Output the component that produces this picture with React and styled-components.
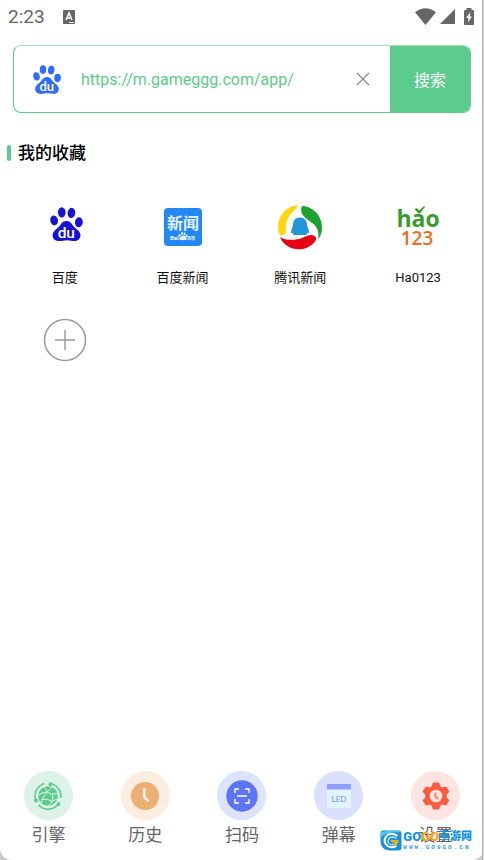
import { useState } from 'react';
import styled, { createGlobalStyle } from 'styled-components';

const GlobalStyle = createGlobalStyle`
  * {
    box-sizing: border-box;
  }
  body {
    margin: 0;
    background: #c9c9c9;
    font-family: Roboto, 'Noto Sans CJK SC', sans-serif;
  }
  button {
    font-family: inherit;
    border: none;
    padding: 0;
    background: none;
    cursor: pointer;
  }
  svg {
    flex-shrink: 0;
    overflow: visible;
  }
`;

const Screen = styled.div`
  position: relative;
  display: flex;
  flex-direction: column;
  min-height: 100vh;
  background: white;
  border-radius: 0 0 12px 12px;
`;

const Edge = styled.div`
  position: absolute;
  top: 0;
  right: 0;
  bottom: 0;
  width: 2px;
  background: #dcdcdc;
  border-left: 1px solid #b0b0b0;
`;

const StatusBar = styled.header`
  display: flex;
  align-items: center;
  height: 32px;
  padding: 2px 5px 0 8px;
  color: #666666;
`;

const Clock = styled.time`
  font-size: 19px;
  line-height: 30px;
  margin-right: 17px;
`;

const StatusIcons = styled.div`
  display: flex;
  align-items: center;
  gap: 4px;
  margin-left: auto;
  padding-bottom: 2px;
`;

const SearchBar = styled.form`
  display: flex;
  height: 68px;
  margin: 13px 13px 0;
  border: 1px solid #5dcb8d;
  border-top-color: #a5dfbf;
  border-radius: 8px;
  overflow: hidden;
`;

const Engine = styled.button`
  display: flex;
  align-items: center;
  width: 67px;
  padding-left: 19px;
`;

const UrlInput = styled.input`
  flex: 1;
  min-width: 0;
  border: none;
  outline: none;
  padding: 0;
  background: transparent;
  color: #5dcb8d;
  font-family: Roboto, sans-serif;
  font-size: 16px;
`;

const ClearButton = styled.button`
  display: flex;
  align-items: center;
  justify-content: center;
  width: 54px;
`;

const SearchButton = styled.button`
  width: 80px;
  background: #5dcb8d;
  color: white;
  font-size: 16px;
`;

const SectionTitle = styled.h2`
  display: flex;
  align-items: center;
  gap: 7px;
  margin: 27px 0 0 7px;
  font-size: 17px;
  line-height: 26px;
  font-weight: 500;
  color: black;

  &::before {
    content: '';
    width: 4px;
    height: 16px;
    border-radius: 2px;
    background: #5dcb8d;
  }
`;

const Favorites = styled.div`
  display: grid;
  grid-template-columns: repeat(4, 1fr);
  row-gap: 30px;
  padding: 39px 7px 0 6px;
`;

const Favorite = styled.button`
  display: flex;
  flex-direction: column;
  align-items: center;
  gap: 19px;
  color: #111111;
  font-size: 13px;
  line-height: 20px;
`;

const AddButton = styled.button`
  display: flex;
  justify-self: center;
`;

const TabBar = styled.nav`
  display: grid;
  grid-template-columns: repeat(5, 1fr);
  margin-top: auto;
  padding-bottom: 12px;
`;

const Tab = styled.button`
  display: flex;
  flex-direction: column;
  align-items: center;
  gap: 2px;
  color: #666666;
  font-size: 17px;
  line-height: 26px;
`;

const TabIcon = styled.span`
  display: flex;
  align-items: center;
  justify-content: center;
  width: 49px;
  height: 49px;
  border-radius: 50%;
  background: ${props => props.$color};
`;

const Watermark = styled.div`
  position: absolute;
  right: 12px;
  bottom: 9px;
  display: flex;
  align-items: center;
  gap: 1px;
`;

const WatermarkText = styled.div`
  display: flex;
  flex-direction: column;
`;

const WatermarkName = styled.div`
  display: flex;
  align-items: center;
  color: #1696dc;
  font-size: 11px;
  line-height: 16px;
  font-weight: 900;
`;

const Brand = styled.span`
  font-family: Roboto, sans-serif;
  font-size: 13px;
  font-weight: 900;
  color: ${props => props.$color};
`;

const WatermarkSite = styled.div`
  color: #2f9fdc;
  font-family: 'Liberation Mono', monospace;
  font-size: 6px;
  line-height: 6px;
  font-weight: 700;
  letter-spacing: 2px;
`;

const PawIcon = ({ size, color }) => (
  <svg width={size} height={size} viewBox="0 0 32 32">
    <g fill={color}>
      <ellipse cx="11.4" cy="5.2" rx="3.7" ry="5" />
      <ellipse cx="20.8" cy="5.8" rx="3.7" ry="5" transform="rotate(8 20.8 5.8)" />
      <ellipse cx="4" cy="13" rx="3.7" ry="4.8" transform="rotate(-12 4 13)" />
      <ellipse cx="28" cy="14.8" rx="3.8" ry="4.8" transform="rotate(6 28 14.8)" />
      <path d="M16 13.600c3 0 4.700 1.800 6 4.200 1.700 3 7.500 5 7.500 9.400 0 3.800-2.300 5.800-5.500 5.800-2.800 0-4.300-.8-7.500-.8s-4.700.8-7.500.8C5.500 33 2.500 31.300 2.500 27.400c0-4.400 5-6.400 7.500-10 1.500-2.300 3-3.800 6-3.800z" />
    </g>
    <text x="15.800" y="30" textAnchor="middle" fontFamily="Roboto, sans-serif" fontWeight="500" fontSize="15" fill="white">du</text>
  </svg>
);

const BaiduIcon = () => (
  <svg width="44" height="44" viewBox="0 0 44 44">
    <g transform="translate(7 2)">
      <PawIcon size={33} color="#1712d6" />
    </g>
  </svg>
);

const BaiduNewsIcon = () => (
  <svg width="44" height="44" viewBox="0 0 44 44">
    <rect x="3" y="3" width="38" height="38" rx="4" fill="#2388f5" />
    <text x="22" y="24" textAnchor="middle" fontFamily="Noto Sans CJK SC, sans-serif" fontWeight="700" fontSize="16" fill="#e4f3ff">新闻</text>
    <g fill="#e4f3ff">
      <text x="9" y="35" fontFamily="Roboto, sans-serif" fontWeight="900" fontSize="6">Bai</text>
      <ellipse cx="18.500" cy="30.500" rx="1" ry="1.400" />
      <ellipse cx="21" cy="28.500" rx="1" ry="1.400" />
      <ellipse cx="23.500" cy="28.800" rx="1" ry="1.400" />
      <ellipse cx="25.500" cy="31" rx="1" ry="1.400" />
      <path d="M22 30.500c2 0 3.800 2.200 3.800 3.500 0 1.600-7.600 1.600-7.600 0 0-1.300 1.800-3.500 3.800-3.500z" />
      <text x="26" y="35" fontFamily="Noto Sans CJK SC, sans-serif" fontWeight="700" fontSize="4">百度</text>
    </g>
  </svg>
);

const TencentIcon = () => (
  <svg width="44" height="44" viewBox="0 0 44 44">
    <path d="M19.500.3C8 1.300.2 11 .2 21.200c0 4.400.3 7.300 1.600 8.600 2.200 1.900 6 .4 6.100-3.200.1-4.300-.6-7.600 1.500-11.900C11.500 9.600 15 7.200 19.500 1.500z" fill="#ffd60a" />
    <path d="M26 .9C37 2.800 44.200 12 44 22.800c-.1 5-1.300 8.600-4 11.700 1.700-7.200-.9-13-5.500-16.300-4.200-3-10-6.400-11.100-11.400C22.600 3 23.800.6 26 .9z" fill="#1ca22e" />
    <path d="M2 32c4.400 3.200 12 3.200 17.500 2.300 5.600-1 9-4.400 13.800-4.400 3.900 0 6 3.200 4 6-3 4.300-9.200 8.400-16.300 8.400C12.500 44.300 5 39.600 2 32z" fill="#e60012" />
    <path d="M22 12.600c4.800 0 7 3.500 7 7.500 0 1.700 2 4.600 2 7.300 0 1.300-1.200 1-2 0-.4 1.300.1 2.600-1.100 2.600H16.100c-1.200 0-.7-1.300-1.100-2.600-.8 1-2 1.300-2 0 0-2.700 2-5.600 2-7.300 0-4 2.200-7.500 7-7.500z" fill="#2196db" />
  </svg>
);

const Hao123Icon = () => (
  <svg width="44" height="44" viewBox="0 0 44 44">
    <text x="22" y="22" textAnchor="middle" fontFamily="Open Sans, sans-serif" fontWeight="700" fontSize="23" fill="#399d2e">hao</text>
    <path d="M18.500 4l2.500-.8 2.300 2.200 4.500-4.200 1.500.3-5.500 7h-1.500z" fill="#399d2e" />
    <text x="21" y="40" textAnchor="middle" fontFamily="Open Sans, sans-serif" fontWeight="600" fontSize="19" fill="#ed6d1e">123</text>
  </svg>
);

const EngineIcon = () => (
  <svg width="28" height="28" viewBox="0 0 28 28" fill="none" stroke="#5dcb8d">
    <circle cx="14" cy="14" r="9.800" fill="#5dcb8d" stroke="none" />
    <path d="M10.500 1.500A13 13 0 0 0 1.500 17.500M16.500 1.500A13 13 0 0 1 26.800 16M24 22.500A13 13 0 0 1 4.500 23" strokeWidth="1.600" />
    <g fill="#5dcb8d" stroke="none">
      <circle cx="16.500" cy="2.200" r="1.900" />
      <circle cx="2" cy="18.500" r="1.900" />
      <circle cx="24.500" cy="22" r="1.900" />
    </g>
    <path d="M4 13.500q4-3.500 9-3.500l5.500-5M13 10q4 3 10.500 1.500M13 10q-4 4-6 11M13 10q0-3-3-5M7.500 17.500q6-1.500 10.500 2l5-2.500M18 19.500q2-4 0-7M18 19.500q-1 3-4 4.500" stroke="#def3e7" strokeWidth="1" />
  </svg>
);

const HistoryIcon = () => (
  <svg width="28" height="28" viewBox="0 0 28 28">
    <circle cx="14" cy="14" r="14" fill="#edb074" />
    <path d="M13.300 7v8.500l3.700 3" fill="none" stroke="white" strokeWidth="2.200" strokeLinecap="round" strokeLinejoin="round" />
  </svg>
);

const ScanIcon = () => (
  <svg width="32" height="32" viewBox="0 0 32 32">
    <circle cx="16" cy="16" r="15.700" fill="#5d74f6" />
    <path d="M9 13V9h4M19 9h4v4M23 19v4h-4M13 23H9v-4M11 16h10" fill="none" stroke="white" strokeWidth="1.400" />
  </svg>
);

const LedIcon = () => (
  <svg width="24" height="24" viewBox="0 0 24 24">
    <rect width="24" height="24" rx="1" fill="#e0f3ff" />
    <path d="M0 5.500V1a1 1 0 0 1 1-1h22a1 1 0 0 1 1 1v4.500z" fill="#909fff" />
    <text x="12" y="18" textAnchor="middle" fontFamily="Lato, sans-serif" fontSize="8" fill="#7890ef">LED</text>
  </svg>
);

const SettingsIcon = () => (
  <svg width="28" height="28" viewBox="0 0 28 28">
    <path d="M10.500 1.500Q10.800.5 12 .5h4q1.200 0 1.500 1l.8 2.700 2.100 1.200 2.800-.7q1.100-.3 1.700.7l2 3.400q.6 1-.2 1.800l-2 2v2.800l2 2q.8.8.2 1.800l-2 3.400q-.6 1-1.700.7l-2.800-.7-2.100 1.200-.8 2.700q-.3 1-1.500 1h-4q-1.200 0-1.500-1l-.8-2.700-2.100-1.200-2.800.7q-1.100.3-1.700-.7l-2-3.400q-.6-1 .2-1.800l2-2v-2.800l-2-2q-.8-.8-.2-1.800l2-3.400q.6-1 1.700-.7l2.800.7 2.100-1.200z" fill="#fb5b3e" />
    <circle cx="14" cy="14" r="6.300" fill="#ffe5e1" />
    <path d="M13.300 10.500v4l3 2.500" fill="none" stroke="#fb8a75" strokeWidth="2" />
  </svg>
);

const LogoIcon = () => (
  <svg width="22" height="21" viewBox="0 0 22 21">
    <path d="M3 .5h15.500q3 0 3 3V17.500q0 3-3 3H10C4 20.500.5 16.500.5 10.500V3q0-2.500 2.500-2.500z" fill="#1593d8" />
    <path d="M1 7Q8 1 19 2.500L21 1Q11-.5 1 2z" fill="#55c5ed" />
    <path d="M17.500 5.800Q10 1.500 6 6.500 2.500 12 7.500 16q4 2.700 9-.2" fill="none" stroke="white" strokeWidth="2" />
    <path d="M16.500 8.200Q11 5.500 8.500 9q-1.800 4 2 5.500 3 1 5-1.500" fill="none" stroke="#b8e6f8" strokeWidth="1.300" />
    <path d="M10 10h8.500q0 4-4 6l-1-2 1.500-1.500H12z" fill="#f8aa1b" />
  </svg>
);

const favorites = [
  { name: '百度', icon: <BaiduIcon /> },
  { name: '百度新闻', icon: <BaiduNewsIcon /> },
  { name: '腾讯新闻', icon: <TencentIcon /> },
  { name: 'Ha0123', icon: <Hao123Icon /> },
];

const tabs = [
  { name: '引擎', color: '#def3e7', icon: <EngineIcon /> },
  { name: '历史', color: '#fcede1', icon: <HistoryIcon /> },
  { name: '扫码', color: '#dce3fd', icon: <ScanIcon /> },
  { name: '弹幕', color: '#dce0ff', icon: <LedIcon /> },
  { name: '设置', color: '#ffe5e1', icon: <SettingsIcon /> },
];

const App = () => {
  const [url, setUrl] = useState('https://m.gameggg.com/app/');

  return (
    <>
      <GlobalStyle />
      <Screen>
        <StatusBar>
          <Clock>2:23</Clock>
          <svg width="14" height="14" viewBox="0 0 14 14">
            <rect x="1" width="12" height="14" rx="1" fill="#666666" />
            <path d="M4 10l3-7 3 7M5 8h4" fill="none" stroke="white" strokeWidth="1.500" />
            <path d="M7 12.500h5" stroke="white" />
          </svg>
          <StatusIcons>
            <svg width="21" height="17" viewBox="0 0 21 17">
              <path d="M0 4.200Q10.500-3.800 21 4.200L10.500 17z" fill="#666666" />
            </svg>
            <svg width="15" height="15" viewBox="0 0 15 15">
              <path d="M15 0v15H0z" fill="#666666" />
            </svg>
            <svg width="20" height="17" viewBox="0 0 20 17">
              <path d="M7.500 0h5v2H14q1 0 1 1v13q0 1-1 1H6q-1 0-1-1V3q0-1 1-1h1.500z" fill="#666666" />
              <path d="M11.500 4L7 10h2.500L9 14.500l4-6h-2.300z" fill="white" />
            </svg>
          </StatusIcons>
        </StatusBar>

        <SearchBar onSubmit={e => e.preventDefault()}>
          <Engine type="button" aria-label="百度">
            <PawIcon size={28} color="#316bff" />
          </Engine>
          <UrlInput aria-label="网址" value={url} onChange={e => setUrl(e.target.value)} />
          <ClearButton type="button" aria-label="清除" onClick={() => setUrl('')}>
            <svg width="14" height="14" viewBox="0 0 14 14">
              <path d="M1 1l12 12M13 1L1 13" stroke="#888888" strokeWidth="1.200" />
            </svg>
          </ClearButton>
          <SearchButton type="submit">搜索</SearchButton>
        </SearchBar>

        <SectionTitle>我的收藏</SectionTitle>
        <Favorites>
          {favorites.map(item => (
            <Favorite key={item.name}>
              {item.icon}
              {item.name}
            </Favorite>
          ))}
          <AddButton aria-label="添加">
            <svg width="44" height="44" viewBox="0 0 44 44" fill="none" stroke="#999999" strokeWidth="1.500">
              <circle cx="22" cy="22" r="20.500" />
              <path d="M22 12v20M12 22h20" />
            </svg>
          </AddButton>
        </Favorites>

        <TabBar>
          {tabs.map(tab => (
            <Tab key={tab.name}>
              <TabIcon $color={tab.color}>{tab.icon}</TabIcon>
              {tab.name}
            </Tab>
          ))}
        </TabBar>

        <Watermark>
          <LogoIcon />
          <WatermarkText>
            <WatermarkName>
              <Brand $color="#1696dc">GO</Brand>
              <Brand $color="#f8a51b">GO</Brand>
              手游网
            </WatermarkName>
            <WatermarkSite>WWW.GO9GO.CN</WatermarkSite>
          </WatermarkText>
        </Watermark>
        <Edge />
      </Screen>
    </>
  );
};

export default App;
